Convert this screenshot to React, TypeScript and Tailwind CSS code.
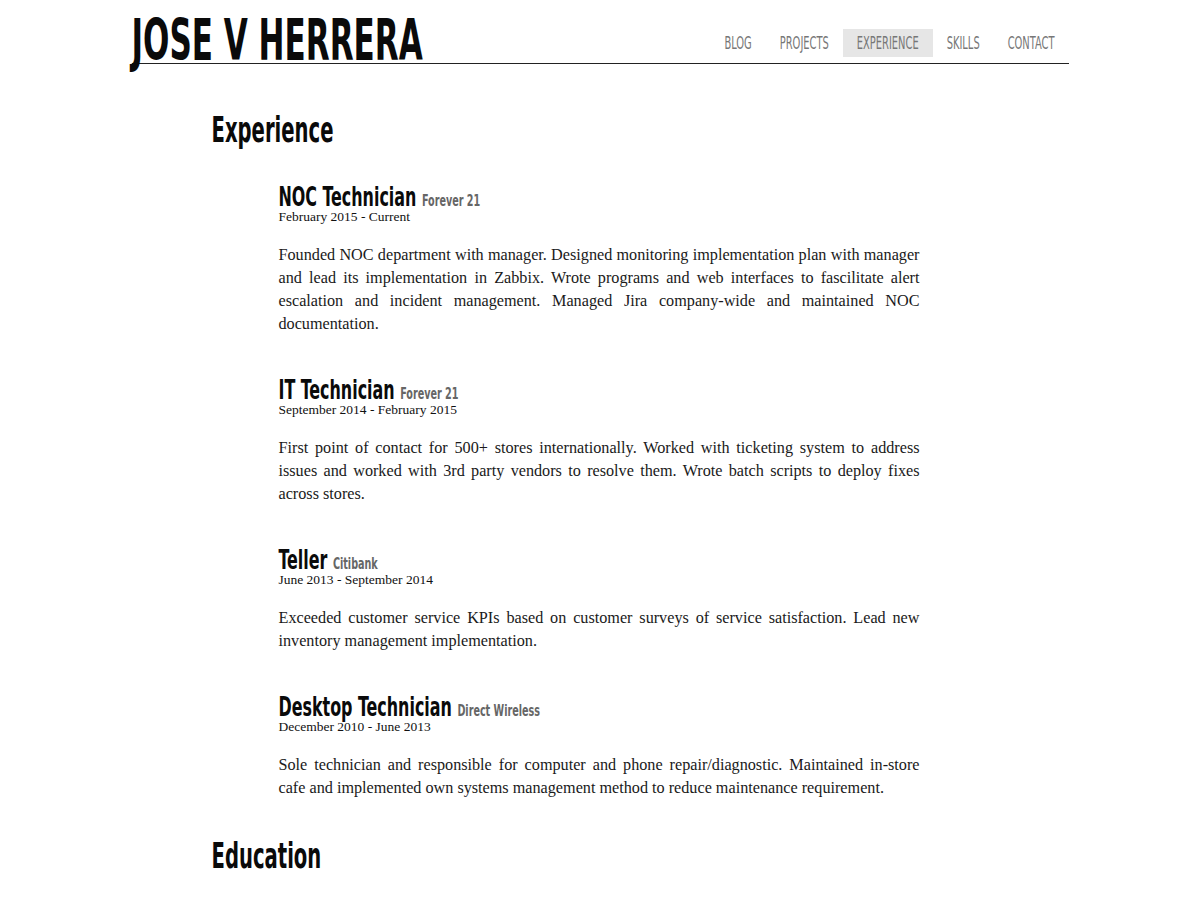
const heading =
  "font-['Liberation_Sans_Narrow','Arial_Narrow','DejaVu_Sans_Condensed',sans-serif] [font-stretch:condensed]";
const body = "font-['Liberation_Serif','Times_New_Roman',serif]";

type Job = {
  title: string;
  company: string;
  dates: string;
  lines: string[];
};

const jobs: Job[] = [
  {
    title: "NOC Technician",
    company: "Forever 21",
    dates: "February 2015 - Current",
    lines: [
      "Founded NOC department with manager. Designed monitoring implementation plan with manager",
      "and lead its implementation in Zabbix. Wrote programs and web interfaces to fascilitate alert",
      "escalation and incident management. Managed Jira company-wide and maintained NOC",
      "documentation.",
    ],
  },
  {
    title: "IT Technician",
    company: "Forever 21",
    dates: "September 2014 - February 2015",
    lines: [
      "First point of contact for 500+ stores internationally. Worked with ticketing system to address",
      "issues and worked with 3rd party vendors to resolve them. Wrote batch scripts to deploy fixes",
      "across stores.",
    ],
  },
  {
    title: "Teller",
    company: "Citibank",
    dates: "June 2013 - September 2014",
    lines: [
      "Exceeded customer service KPIs based on customer surveys of service satisfaction. Lead new",
      "inventory management implementation.",
    ],
  },
  {
    title: "Desktop Technician",
    company: "Direct Wireless",
    dates: "December 2010 - June 2013",
    lines: [
      "Sole technician and responsible for computer and phone repair/diagnostic. Maintained in-store",
      "cafe and implemented own systems management method to reduce maintenance requirement.",
    ],
  },
];

const navItems = ["Blog", "Projects", "Experience", "Skills", "Contact"];

function Header() {
  return (
    <header className="w-[937px] mx-auto flex items-end justify-between pt-[29px] border-b border-[#222]">
      <h1 className={`${heading} font-bold text-[34.5px] leading-[30px] text-[#0a0a0a]`}>
        <span className="inline-block origin-[0_90%] scale-y-[1.66]">JOSE V HERRERA</span>
      </h1>
      <nav className="flex mb-[6px]">
        {navItems.map((item) => (
          <a
            key={item}
            href="#"
            className={`${heading} block h-[28px] px-[14px] text-[11px] leading-[34px] uppercase text-[#777] ${
              item === "Experience" ? "bg-[#e6e6e6]" : ""
            }`}
          >
            <span className="inline-block origin-[0_61%] scale-y-[1.58]">{item}</span>
          </a>
        ))}
      </nav>
    </header>
  );
}

function SectionTitle({ children, className = "" }: { children: string; className?: string }) {
  return (
    <h2 className={`${heading} ml-[80px] font-bold text-[21.8px] leading-[30px] text-[#0a0a0a] ${className}`}>
      <span className="inline-block origin-[0_75%] scale-y-[1.64]">{children}</span>
    </h2>
  );
}

function JobEntry({ job, first }: { job: Job; first: boolean }) {
  return (
    <div className={first ? "mt-[39px]" : "mt-[46px]"}>
      <h3 className={`${heading} font-bold text-[17.7px] leading-[22px] text-[#0a0a0a]`}>
        <span className="inline-block leading-[18px] origin-[0_84%] scale-y-[1.55]">
          {job.title}{" "}
          <span className="text-[10.7px] leading-[12px] text-[#666]">{job.company}</span>
        </span>
      </h3>
      <p className={`${body} text-[13.5px] leading-[12px] text-[#111]`}>{job.dates}</p>
      <p className={`${body} mt-[21px] text-[16.2px] leading-[23px] text-[#1a1a1a]`}>
        {job.lines.map((line, i) => (
          <span
            key={i}
            className={
              i < job.lines.length - 1
                ? "block whitespace-nowrap text-justify [text-align-last:justify]"
                : "block"
            }
          >
            {line}
          </span>
        ))}
      </p>
    </div>
  );
}

export default function App() {
  return (
    <div className="min-h-screen bg-white">
      <Header />
      <main className="w-[937px] mx-auto pt-[56px] pb-10">
        <SectionTitle>Experience</SectionTitle>
        <div className="ml-[147px] w-[641px]">
          {jobs.map((job, i) => (
            <JobEntry key={job.title} job={job} first={i === 0} />
          ))}
        </div>
        <SectionTitle className="mt-[46px]">Education</SectionTitle>
      </main>
    </div>
  );
}
